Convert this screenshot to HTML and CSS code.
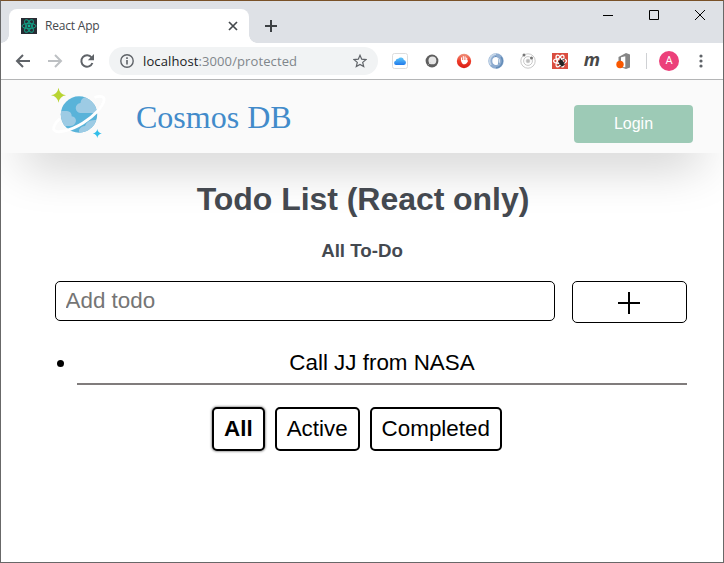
FILE: index.html
```html
<!DOCTYPE html>
<html lang="en">
<head>
<meta charset="utf-8">
<title>React App</title>
<link rel="stylesheet" href="styles.css">
</head>
<body>
<div class="window">
  <div class="tabbar">
    <div class="tab">
      <svg class="favicon" width="16" height="16" viewBox="0 0 16 16"><rect width="16" height="16" fill="#282c34"/><g fill="none" stroke="#12a287" stroke-width="1"><ellipse cx="8" cy="8" rx="7" ry="2.7"/><ellipse cx="8" cy="8" rx="7" ry="2.7" transform="rotate(60 8 8)"/><ellipse cx="8" cy="8" rx="7" ry="2.7" transform="rotate(120 8 8)"/></g><circle cx="8" cy="8" r="1.4" fill="#14b596"/></svg>
      <span class="tab-title">React App</span>
      <svg width="10" height="10" viewBox="0 0 10 10" stroke="#45494d" stroke-width="1.7"><path d="M1 1l8 8M9 1l-8 8"/></svg>
    </div>
    <svg class="new-tab" width="12" height="12" viewBox="0 0 12 12" stroke="#3c4043" stroke-width="2"><path d="M6 0v12M0 6h12"/></svg>
    <div class="controls">
      <svg width="12" height="12" viewBox="0 0 12 12"><path d="M1 6.5h10" stroke="#000"/></svg>
      <svg width="12" height="12" viewBox="0 0 12 12"><path d="M1.500 1.500h9v9h-9z" fill="none" stroke="#000"/></svg>
      <svg width="12" height="12" viewBox="0 0 12 12"><path d="M1 1l10 10M11 1L1 11" stroke="#000"/></svg>
    </div>
  </div>
  <div class="toolbar">
    <svg width="16" height="16" viewBox="0 0 16 16" fill="none" stroke="#5f6368" stroke-width="2"><path d="M15 8H2.500M8 2L2 8l6 6"/></svg>
    <svg width="16" height="16" viewBox="0 0 16 16" fill="none" stroke="#bdc0c3" stroke-width="2"><path d="M1 8h12.500M8 2l6 6-6 6"/></svg>
    <svg width="16" height="16" viewBox="0 0 16 16"><path d="M13.400 10A5.700 5.700 0 1 1 12.600 4.500" fill="none" stroke="#5f6368" stroke-width="2"/><path d="M15 1v6.200H8.800z" fill="#5f6368"/></svg>
    <div class="address">
      <svg width="14" height="14" viewBox="0 0 14 14"><circle cx="7" cy="7" r="6.200" fill="none" stroke="#5f6368" stroke-width="1.400"/><path d="M7 6v4.500M7 3.300v1.600" stroke="#5f6368" stroke-width="1.600"/></svg>
      <span class="url">localhost<span class="path">:3000/protected</span></span>
      <svg class="star" width="14" height="14" viewBox="0 0 14 14"><path d="M7 1.300l1.700 3.900 4.200.4-3.200 2.800 1 4.200L7 10.400l-3.700 2.200 1-4.200L1.100 5.600l4.200-.4z" fill="none" stroke="#5f6368" stroke-width="1.200"/></svg>
    </div>
    <div class="extensions">
      <svg width="16" height="16" viewBox="0 0 16 16"><defs><linearGradient id="cloud" x2="0" y2="1"><stop stop-color="#61c9fa"/><stop offset="1" stop-color="#2079ea"/></linearGradient></defs><rect x=".5" y=".5" width="15" height="15" rx="2" fill="#fff" stroke="#ddd"/><path d="M4 12a2.200 2.200 0 0 1-.3-4.300 2.200 2.200 0 0 1 2.500-1.900 3.200 3.200 0 0 1 5.700 1.300A2.500 2.500 0 0 1 12 12z" fill="url(#cloud)"/></svg>
      <svg width="16" height="16" viewBox="0 0 16 16"><circle cx="8" cy="8" r="6.400" fill="#5e5e5e"/><circle cx="8.400" cy="7.400" r="3.900" fill="#e6e6e6"/><path d="M4.500 11.500l2-2" stroke="#ccc"/></svg>
      <svg width="16" height="16" viewBox="0 0 16 16"><defs><linearGradient id="stop" x2="0" y2="1"><stop stop-color="#ee9580"/><stop offset=".5" stop-color="#ef3c28"/><stop offset="1" stop-color="#d81d16"/></linearGradient></defs><circle cx="8" cy="8" r="7.200" fill="url(#stop)"/><path d="M5.500 7.500V4.800M7.300 7V3.600M9.100 7V3.800M10.700 8V5" stroke="#fff" stroke-width="1.100" stroke-linecap="round"/><path d="M5 7h6.200L12 8c-.6 1.500-1.500 2.600-3 3.200H7C5.800 10.300 5 8.500 5 7z" fill="#fff"/></svg>
      <svg width="16" height="16" viewBox="0 0 16 16" fill="none"><circle cx="8" cy="8" r="5.700" stroke="#8eacd0" stroke-width="4"/><path d="M3 12A6.800 6.800 0 0 1 8 1.200" stroke="#c5d6e8" stroke-width="1.800"/><path d="M8 14.800a6.800 6.800 0 0 0 5-10.800M7 3.500Q11 5 10 11" stroke="#648db8" stroke-width="1.500"/><ellipse cx="8" cy="8" rx="2.400" ry="4" fill="#fff"/></svg>
      <svg width="16" height="16" viewBox="0 0 16 16" fill="none" stroke="#c9c9c9"><circle cx="8" cy="8" r="7.200"/><circle cx="8" cy="8" r="4.400"/><circle cx="8" cy="8" r="1.800" fill="#bbb"/><g fill="#777" stroke="none"><circle cx="4" cy="2" r="1.500"/><circle cx="11.500" cy="5" r="1.500"/></g></svg>
      <svg width="16" height="16" viewBox="0 0 16 16"><rect width="16" height="16" fill="#da4d3f"/><g fill="none" stroke="#fff" stroke-width="1.200"><ellipse cx="8" cy="8" rx="6.500" ry="2.400"/><ellipse cx="8" cy="8" rx="6.500" ry="2.400" transform="rotate(60 8 8)"/><ellipse cx="8" cy="8" rx="6.500" ry="2.400" transform="rotate(120 8 8)"/></g><g stroke="#222" stroke-width=".8" fill="#222"><ellipse cx="9.500" cy="10" rx="1.800" ry="3" transform="rotate(-25 9.500 10)"/><path d="M6 9l7-3M6 12l7-3M8 14l5-3M8 5l1 3"/></g></svg>
      <span class="ext-m">m</span>
      <svg width="16" height="16" viewBox="0 0 16 16"><path d="M2.500 4L10 0l4 1.500v13L10 16l-6-2 5.300.2V3.200L5 4.200V8H2.500z" fill="#858585"/><circle cx="4" cy="11.500" r="3.700" fill="#f95800"/></svg>
    </div>
    <div class="divider"></div>
    <div class="avatar">A</div>
    <svg class="menu" width="4" height="14" viewBox="0 0 4 14" fill="#5f6368"><circle cx="2" cy="2" r="1.600"/><circle cx="2" cy="7" r="1.600"/><circle cx="2" cy="12" r="1.600"/></svg>
  </div>
  <div class="page">
    <header class="header">
      <svg class="logo" width="56" height="56" viewBox="0 0 56 56"><defs><clipPath id="globe"><circle cx="28" cy="30.500" r="18.200"/></clipPath></defs>
        <circle cx="28" cy="30.500" r="18.200" fill="#59b3d9"/>
        <g clip-path="url(#globe)" fill="#9dcbe4"><path d="M30 29a5 5 0 0 1-.5-10A6.500 6.500 0 0 1 42 17h6v12z"/><path d="M8 27h8a4.600 4.600 0 0 1 4.600 5.200Q25 33 25 37q-1 5-6 5H8z"/><path d="M28 46q2-4 6-4 2-7 12-6v13H28z"/></g>
        <path d="M43.500 13.500C49 11.300 54 12.500 53 16.500C52 22 44 31.500 32 39C20 46.500 5 50.500 2.700 45.500Q2 41 9 34.500" fill="none" stroke="#fff" stroke-width="2.800"/>
        <path d="M7.500 3.800q1 6.500 7.500 7.500-6.500 1-7.500 7.500-1-6.500-7.500-7.500 6.500-1 7.500-7.500z" fill="#b8d432"/>
        <path d="M46.300 45q.6 3.900 4.500 4.500-3.900.6-4.500 4.500-.6-3.900-4.500-4.500 3.900-.6 4.500-4.500z" fill="#32bee9"/></svg>
      <div class="brand">Cosmos DB</div>
      <button class="login">Login</button>
    </header>
    <main class="main">
      <h1>Todo List (React only)</h1>
      <h3>All To-Do</h3>
      <form class="add-form">
        <input type="text" placeholder="Add todo">
        <button type="button" aria-label="Add"><svg width="22" height="22" viewBox="0 0 22 22" stroke="#000" stroke-width="2"><path d="M11 0v22M0 11h22"/></svg></button>
      </form>
      <ul class="todos"><li>Call JJ from NASA</li></ul>
      <div class="filters"><button class="active">All</button><button>Active</button><button>Completed</button></div>
    </main>
  </div>
</div>
</body>
</html>
```
FILE: styles.css
```css
* { box-sizing: border-box; }
body { margin: 0; font-family: "Liberation Sans", Arial, sans-serif; overflow: hidden; }
svg { display: block; flex: none; }
.window { width: 724px; height: 563px; border: 1px solid #686868; border-top-color: #795128; display: flex; flex-direction: column; background: #fff; }
.tabbar { height: 42px; background: #dee1e6; display: flex; padding: 8px 17px 0 8px; }
.tab { position: relative; width: 240px; height: 34px; background: #fff; border-radius: 8px 8px 0 0; display: flex; align-items: center; padding: 0 11px 0 12px; }
.tab::before, .tab::after { content: ""; position: absolute; bottom: 0; width: 8px; height: 8px; }
.tab::before { left: -8px; background: radial-gradient(circle at 0 0, transparent 7.5px, #fff 8px); }
.tab::after { right: -8px; background: radial-gradient(circle at 100% 0, transparent 7.5px, #fff 8px); }
.tab-title { flex: 1; margin: -1px 0 0 8px; font: 12px "Open Sans", sans-serif; letter-spacing: -.2px; color: #45494d; }
.new-tab { margin: 11px 0 0 16px; }
.controls { margin-left: auto; display: flex; gap: 34px; }
.toolbar { height: 37px; flex: none; border-bottom: 1px solid #b4b5b6; display: flex; align-items: center; padding: 0 13px 0 14px; gap: 16px; }
.address { width: 269px; height: 28px; margin-left: -2px; border-radius: 14px; background: #f1f3f4; display: flex; align-items: center; padding: 0 11px 0 11px; }
.url { margin-left: 9px; font: 13px "Open Sans", sans-serif; letter-spacing: .11px; color: #202124; white-space: nowrap; }
.path { color: #80868b; }
.star { margin-left: auto; }
.extensions { display: flex; align-items: center; gap: 16px; margin: 0 -1px 0 -2px; }
.ext-m { width: 16px; font: italic bold 18px/16px "Open Sans", sans-serif; height: 20px; color: #484848; display: flex; justify-content: center; }
.divider { width: 1px; height: 16px; background: #cfd1d4; margin: 0 -4px 0 -1px; }
.avatar { width: 20px; height: 20px; border-radius: 50%; background: #ec407a; color: #fff; font: 11px/20px Roboto, sans-serif; text-align: center; }
.menu { margin-left: 4px; }
.page { flex: 1; overflow: hidden; }
.header { height: 73px; background: #fafafa; display: flex; padding: 0 30px 0 50px; box-shadow: 0 30px 50px -22px rgba(0,0,0,.28); }
.logo { margin-top: 4px; }
.brand { margin: 19px auto 0 29px; font: 32px/37px "Liberation Serif", "Times New Roman", serif; color: #428bca; }
.login { width: 119px; height: 38px; margin-top: 25px; border: 0; border-radius: 4px; padding: 0; background: #9dcab6; color: #fff; font: 16px "Liberation Sans", Arial, sans-serif; }
.main { padding: 0 36px 0 54px; text-align: center; font-size: 22.4px; }
h1, h3 { color: #444950; margin: 0 -16px 0 -34px; }
h1 { padding: 28px 0 0 2px; font-size: 32px; line-height: 37px; letter-spacing: -.05px; }
h3 { margin-top: 22px; font-size: 18.72px; line-height: 22px; }
.add-form { display: flex; align-items: flex-start; gap: 17px; margin-top: 19px; }
.add-form input { width: 500px; height: 40px; border: 1px solid #000; border-radius: 5px; padding: 0 9.500px; font: 22.4px "Liberation Sans", Arial, sans-serif; }
.add-form input::placeholder { color: #757575; }
.add-form button { width: 115px; height: 42px; border: 1px solid #000; border-radius: 5px; background: #fff; display: flex; align-items: center; justify-content: center; padding: 2px 1px 0 0; }
.todos { margin: 22px 0 0 22px; padding: 0; }
.todos li { height: 40px; line-height: 36px; border-bottom: 2px solid #807c7c; }
.filters { display: flex; gap: 10px; margin: 22px 0 0 157px; }
.filters button { height: 44px; border: 2px solid #000; border-radius: 5px; background: #fff; padding: 0 10px; font: 22.4px "Liberation Sans", Arial, sans-serif; color: #000; }
.filters .active { font-weight: bold; box-shadow: 0 0 2px 1px rgba(0,0,0,.35); }
```
